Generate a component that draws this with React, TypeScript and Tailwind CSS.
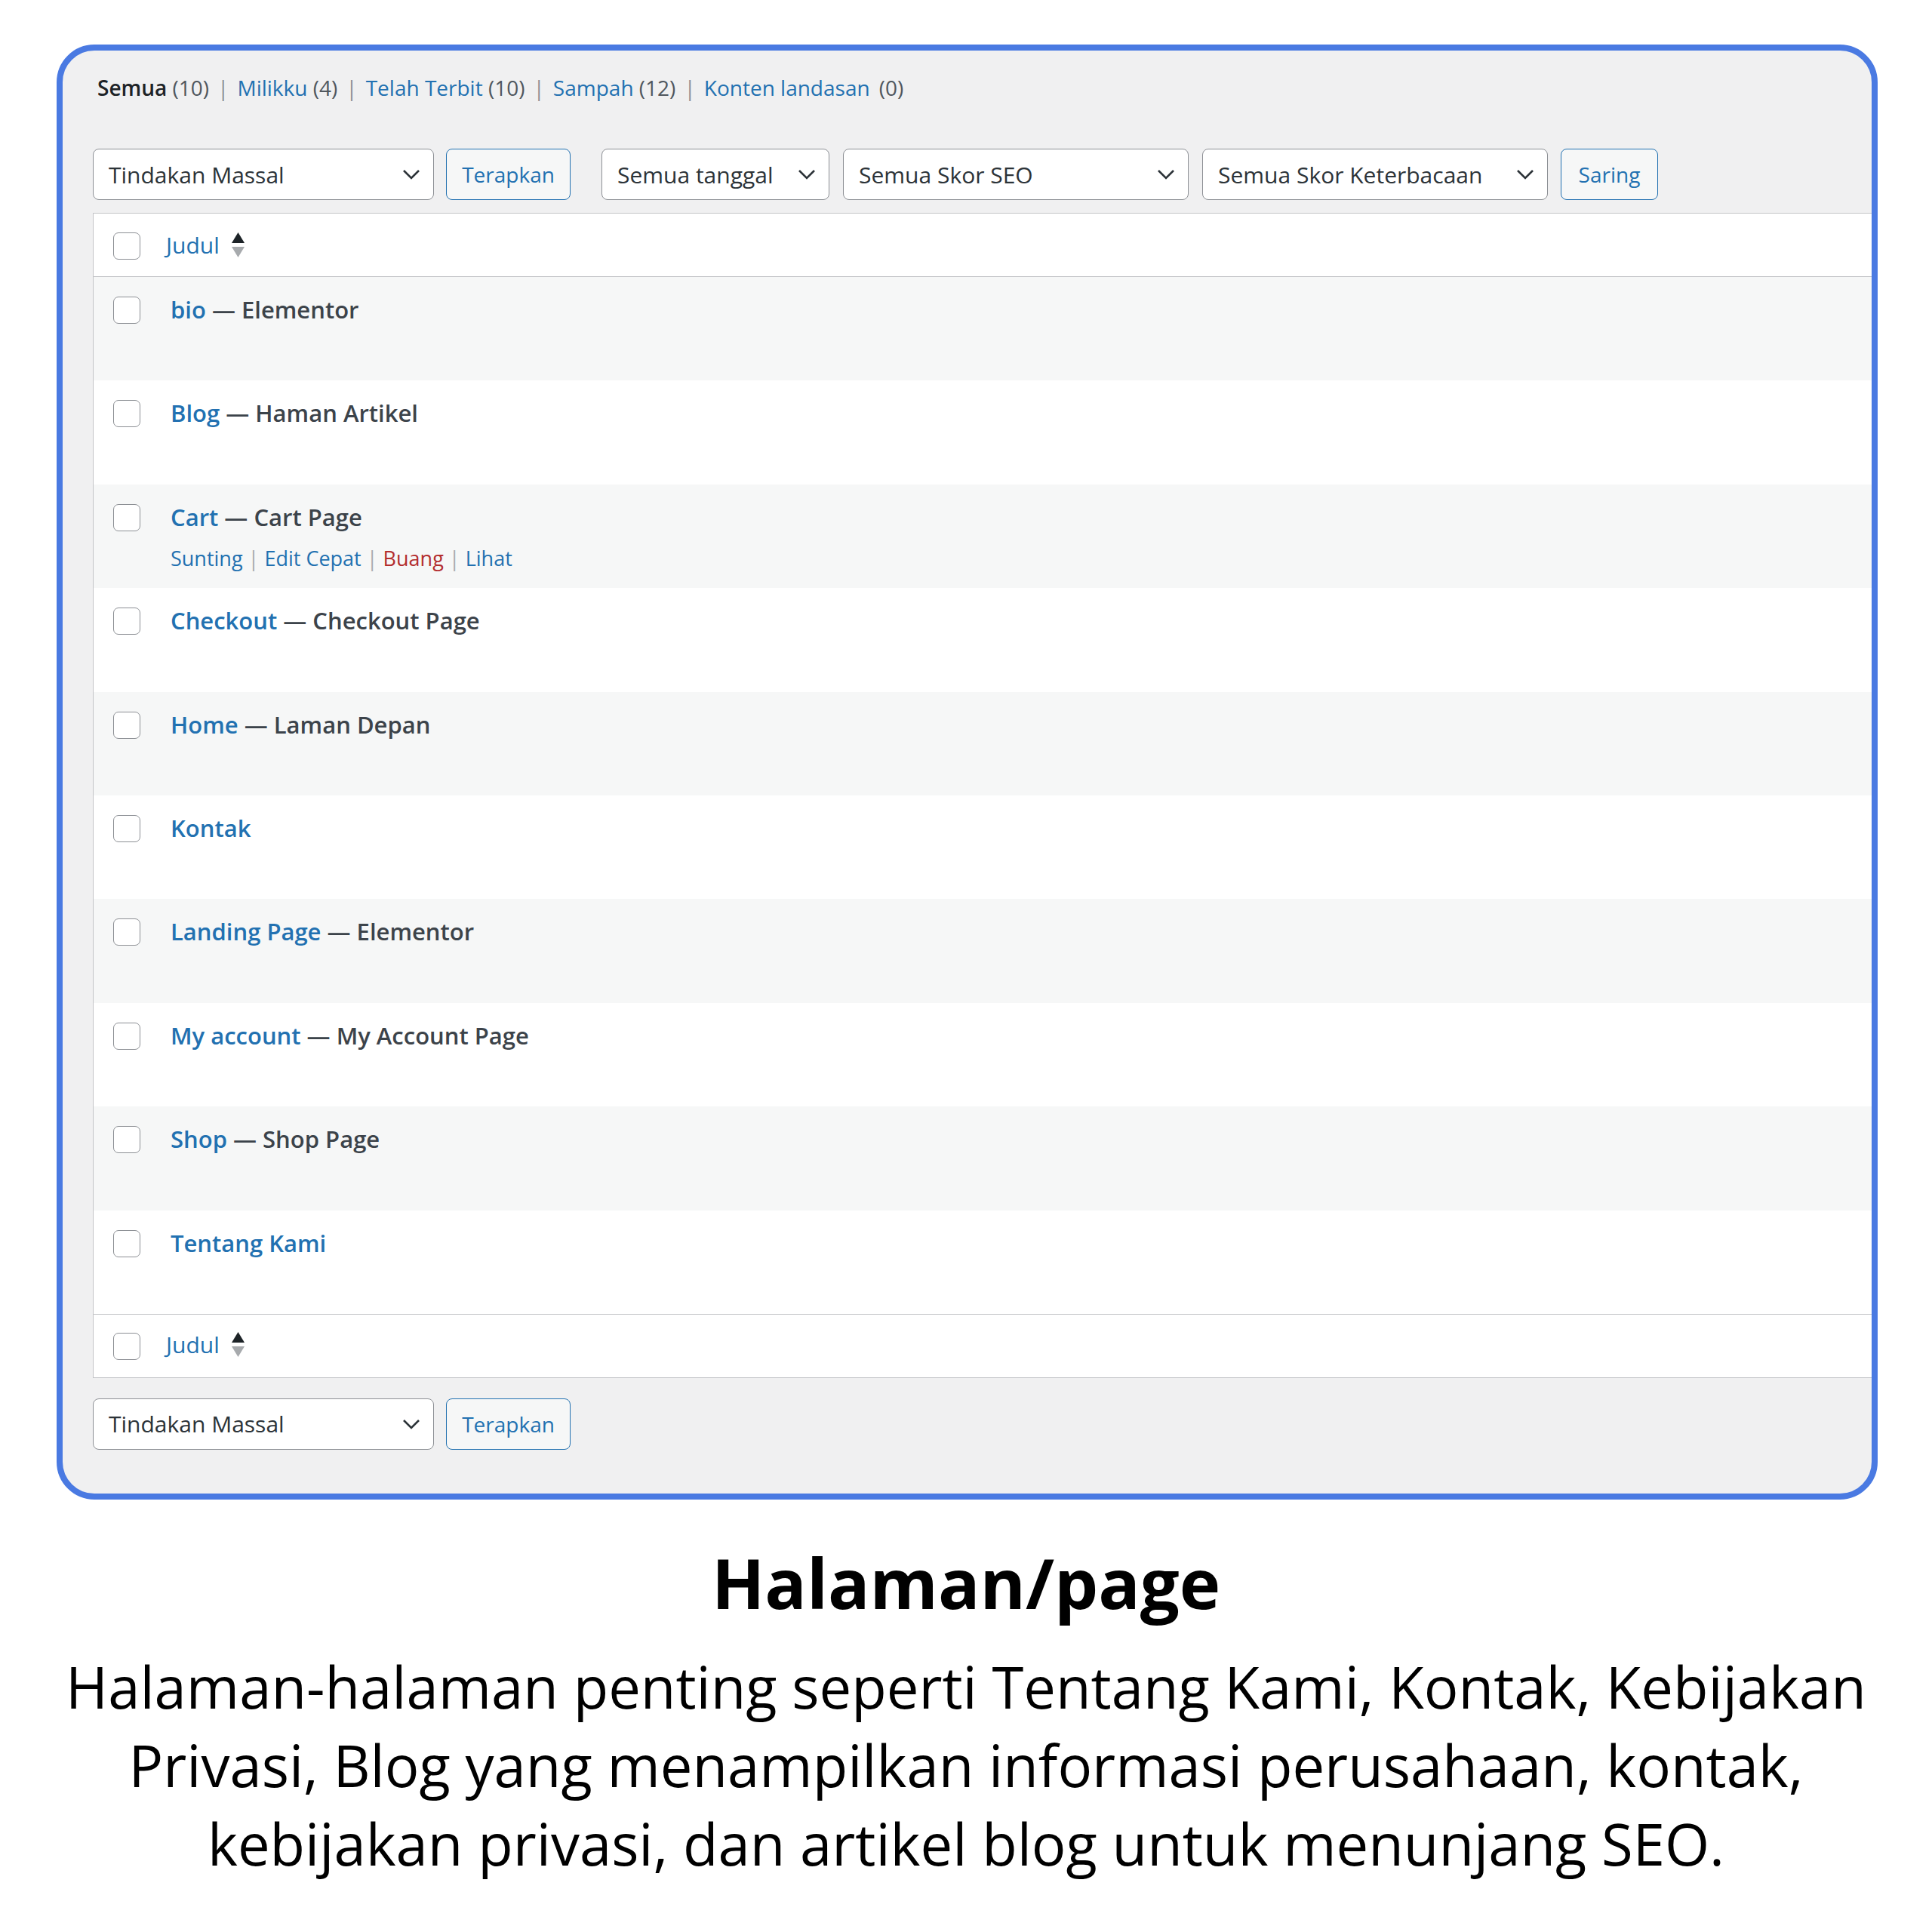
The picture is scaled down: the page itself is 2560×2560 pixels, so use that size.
import React from 'react';

const rows = [
  { title: 'bio', state: 'Elementor' },
  { title: 'Blog', state: 'Haman Artikel' },
  { title: 'Cart', state: 'Cart Page', actions: true },
  { title: 'Checkout', state: 'Checkout Page' },
  { title: 'Home', state: 'Laman Depan' },
  { title: 'Kontak' },
  { title: 'Landing Page', state: 'Elementor' },
  { title: 'My account', state: 'My Account Page' },
  { title: 'Shop', state: 'Shop Page' },
  { title: 'Tentang Kami' },
];

const Checkbox = () => (
  <div className="w-[36px] h-[36px] shrink-0 rounded-[7px] border-[1.5px] border-[#8c8f94] bg-white" />
);

const Chevron = () => (
  <svg width="24" height="14" viewBox="0 0 24 14" className="shrink-0">
    <polyline points="2,2 12,12 22,2" fill="none" stroke="#2c3338" strokeWidth="2.6" />
  </svg>
);

const SortArrows = () => (
  <svg width="19" height="34" viewBox="0 0 19 34" className="shrink-0">
    <polygon points="1,14 9.5,0 18,14" fill="#1d2327" />
    <polygon points="1,19 18,19 9.5,33" fill="#a7aaad" />
  </svg>
);

const Select = ({ label, width }: { label: string; width: string }) => (
  <div
    className={`${width} h-[68px] shrink-0 flex items-center justify-between pl-[20px] pr-[17px] bg-white border border-[#8c8f94] rounded-[8px] text-[30px] text-[#2c3338]`}
  >
    <span className="whitespace-nowrap">{label}</span>
    <Chevron />
  </div>
);

const Button = ({ label, width }: { label: string; width: string }) => (
  <div
    className={`${width} h-[68px] shrink-0 flex items-center justify-center bg-[#f6f7f7] border-[1.5px] border-[#2271b1] rounded-[8px] text-[28px] text-[#2271b1]`}
  >
    {label}
  </div>
);

const Sep = () => <span className="mx-[11px] text-[#8c8f94]">|</span>;

const HeadRow = ({ cbTop, textTop }: { cbTop: string; textTop: string }) => (
  <div className="h-[83px] flex items-start bg-white pl-[26px]">
    <div className={cbTop}>
      <Checkbox />
    </div>
    <div className={`${textTop} ml-[34px] flex items-start gap-[15px]`}>
      <span className="text-[30px] leading-[42px] text-[#2271b1]">Judul</span>
      <div className="mt-[4px]">
        <SortArrows />
      </div>
    </div>
  </div>
);

export default function App() {
  return (
    <div className="w-[2560px] h-[2560px] bg-white" style={{ fontFamily: '"Open Sans", "Noto Sans", sans-serif' }}>
      <div className="ml-[75px] mr-[72px] pt-[59px]">
        <div className="h-[1928px] rounded-[50px] border-[8px] border-[#4a7ae2] bg-[#f0f0f1] overflow-hidden">
          <div className="pl-[40px] pt-[29px]">
            {/* filtros de estado */}
            <div className="ml-[6px] h-[40px] flex items-center text-[28px] leading-[40px] whitespace-nowrap">
              <span className="font-semibold text-[#1d2327]">Semua</span>
              <span className="text-[#50575e]">&nbsp;(10)</span>
              <Sep />
              <span className="text-[#2271b1]">Milikku</span>
              <span className="text-[#50575e]">&nbsp;(4)</span>
              <Sep />
              <span className="text-[#2271b1]">Telah Terbit</span>
              <span className="text-[#50575e]">&nbsp;(10)</span>
              <Sep />
              <span className="text-[#2271b1]">Sampah</span>
              <span className="text-[#50575e]">&nbsp;(12)</span>
              <Sep />
              <span className="text-[#2271b1]">Konten landasan</span>
              <span className="ml-[12px] text-[#50575e]">(0)</span>
            </div>

            {/* toolbar atas */}
            <div className="mt-[61px] flex items-center">
              <Select label="Tindakan Massal" width="w-[452px]" />
              <div className="ml-[16px]">
                <Button label="Terapkan" width="w-[165px]" />
              </div>
              <div className="ml-[41px]">
                <Select label="Semua tanggal" width="w-[302px]" />
              </div>
              <div className="ml-[18px]">
                <Select label="Semua Skor SEO" width="w-[458px]" />
              </div>
              <div className="ml-[18px]">
                <Select label="Semua Skor Keterbacaan" width="w-[458px]" />
              </div>
              <div className="ml-[17px]">
                <Button label="Saring" width="w-[129px]" />
              </div>
            </div>

            {/* tabel */}
            <div className="mt-[17px] border-t border-l border-b border-[#c3c4c7] bg-white">
              <div className="border-b border-[#c3c4c7]">
                <HeadRow cbTop="mt-[25px]" textTop="mt-[21px]" />
              </div>
              {rows.map((row, i) => (
                <div
                  key={row.title}
                  className={`h-[137.4px] flex items-start pl-[26px] ${i % 2 === 0 ? 'bg-[#f6f7f7]' : 'bg-white'}`}
                >
                  <div className="mt-[26px]">
                    <Checkbox />
                  </div>
                  <div className="ml-[40px] mt-[22px]">
                    <div className="text-[31px] leading-[43px] font-semibold whitespace-nowrap">
                      <span className="text-[#2271b1]">{row.title}</span>
                      {row.state && <span className="text-[#3c434a]"> — {row.state}</span>}
                    </div>
                    {row.actions && (
                      <div className="mt-[14px] text-[27px] leading-[38px] whitespace-nowrap">
                        <span className="text-[#2271b1]">Sunting</span>
                        <span className="text-[#a7aaad]"> | </span>
                        <span className="text-[#2271b1]">Edit Cepat</span>
                        <span className="text-[#a7aaad]"> | </span>
                        <span className="text-[#b32d2e]">Buang</span>
                        <span className="text-[#a7aaad]"> | </span>
                        <span className="text-[#2271b1]">Lihat</span>
                      </div>
                    )}
                  </div>
                </div>
              ))}
              <div className="border-t border-[#c3c4c7]">
                <HeadRow cbTop="mt-[24px]" textTop="mt-[19px]" />
              </div>
            </div>

            {/* toolbar bawah */}
            <div className="mt-[27px] flex items-center">
              <Select label="Tindakan Massal" width="w-[452px]" />
              <div className="ml-[16px]">
                <Button label="Terapkan" width="w-[165px]" />
              </div>
            </div>
          </div>
        </div>
      </div>

      {/* keterangan */}
      <div className="mt-[55px] text-center text-black">
        <h1 className="text-[92px] leading-[110px] font-bold">Halaman/page</h1>
        <p className="mt-[31px] text-[76px] leading-[104px]">
          Halaman-halaman penting seperti Tentang Kami, Kontak, Kebijakan
          <br />
          Privasi, Blog yang menampilkan informasi perusahaan, kontak,
          <br />
          kebijakan privasi, dan artikel blog untuk menunjang SEO.
        </p>
      </div>
    </div>
  );
}
